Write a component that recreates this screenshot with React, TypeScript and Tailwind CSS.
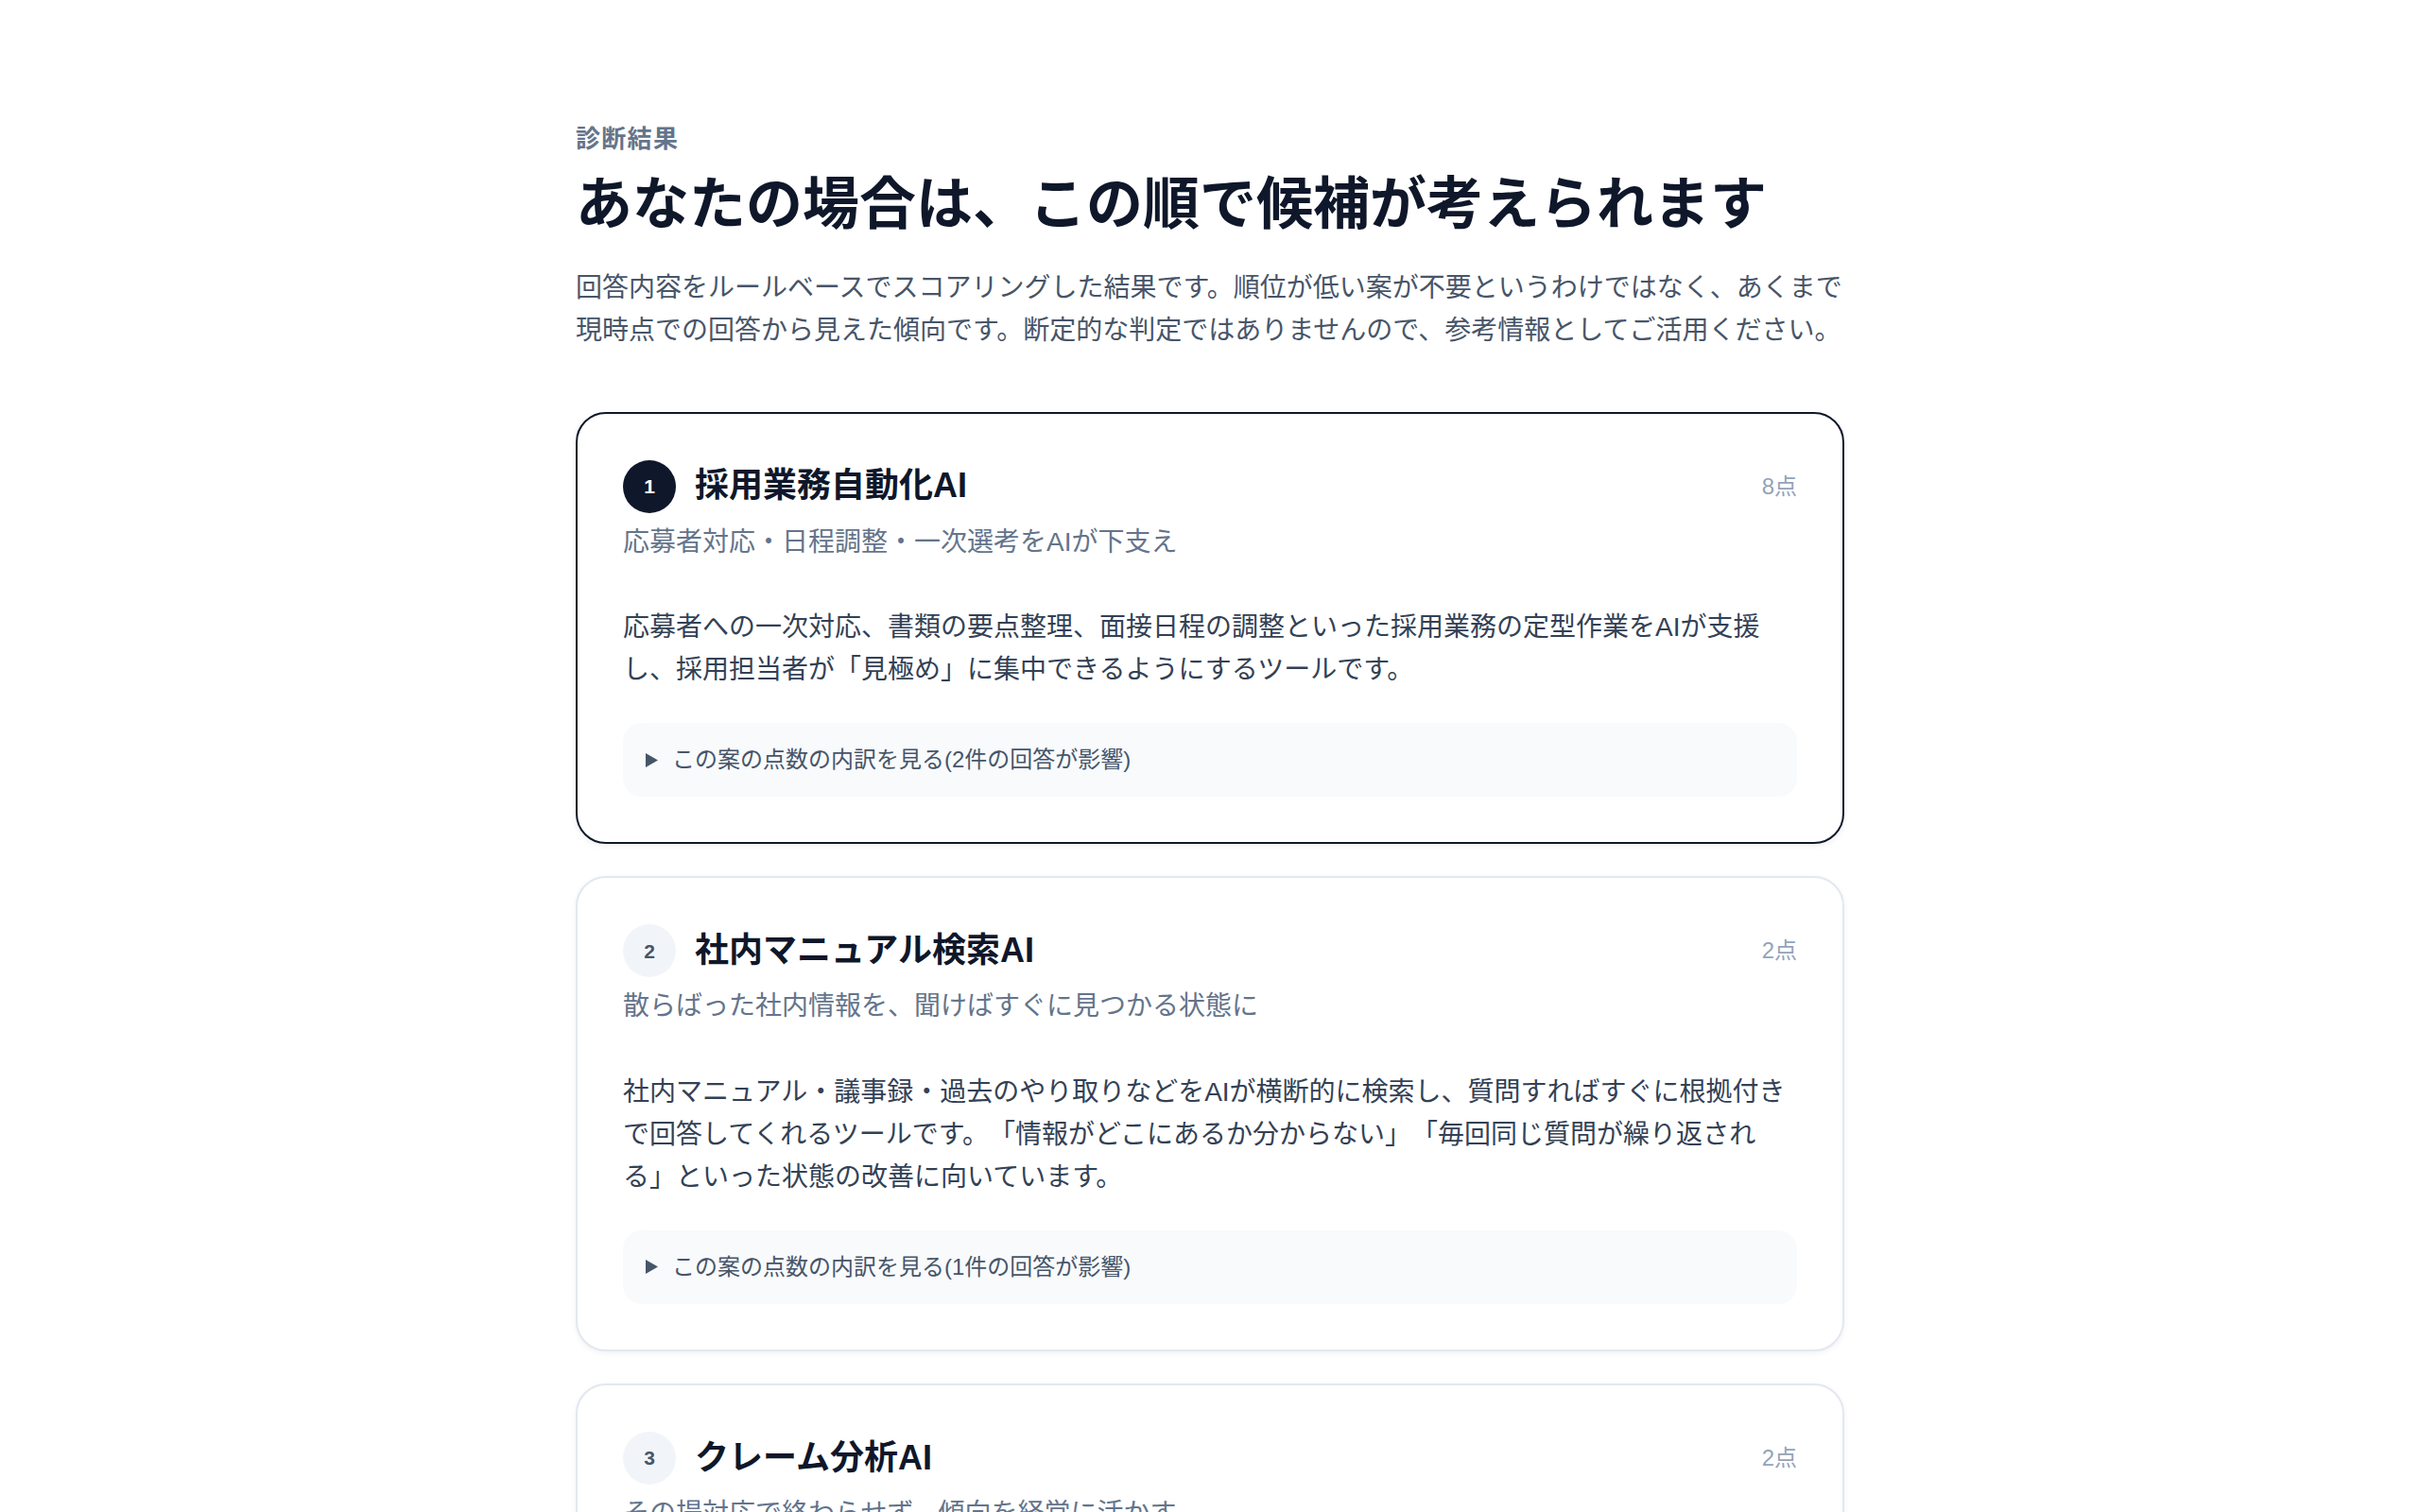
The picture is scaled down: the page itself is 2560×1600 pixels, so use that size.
import React from "react";

type Item = {
  rank: number;
  title: string;
  score: string;
  subtitle: string;
  desc: string;
  count: number;
};

const items: Item[] = [
  {
    rank: 1,
    title: "採用業務自動化AI",
    score: "8点",
    subtitle: "応募者対応・日程調整・一次選考をAIが下支え",
    desc: "応募者への一次対応、書類の要点整理、面接日程の調整といった採用業務の定型作業をAIが支援し、採用担当者が「見極め」に集中できるようにするツールです。",
    count: 2,
  },
  {
    rank: 2,
    title: "社内マニュアル検索AI",
    score: "2点",
    subtitle: "散らばった社内情報を、聞けばすぐに見つかる状態に",
    desc: "社内マニュアル・議事録・過去のやり取りなどをAIが横断的に検索し、質問すればすぐに根拠付きで回答してくれるツールです。「情報がどこにあるか分からない」「毎回同じ質問が繰り返される」といった状態の改善に向いています。",
    count: 1,
  },
  {
    rank: 3,
    title: "クレーム分析AI",
    score: "2点",
    subtitle: "その場対応で終わらせず、傾向を経営に活かす",
    desc: "問い合わせやクレームの内容をAIが自動で分類・集計し、頻出する不満や改善すべきポイントを可視化するツールです。個別対応の記録を、サービス改善や経営判断の材料として活用できます。",
    count: 1,
  },
];

function Card({ item }: { item: Item }) {
  const top = item.rank === 1;
  return (
    <div
      className={
        top
          ? "rounded-[32px] border-2 border-[#0f172a] bg-white px-12 pt-[49px] pb-[48px] shadow-[0_2px_6px_rgba(15,23,42,0.08)]"
          : "rounded-[32px] border-2 border-[#e2e8f0] bg-white px-12 pt-[49px] pb-[48px] shadow-[0_2px_6px_rgba(15,23,42,0.06)]"
      }
    >
      <div className="flex items-center">
        <div
          className={
            top
              ? "flex h-14 w-14 shrink-0 items-center justify-center rounded-full bg-[#0f172a] text-[21px] font-bold text-white"
              : "flex h-14 w-14 shrink-0 items-center justify-center rounded-full bg-[#f1f5f9] text-[21px] font-bold text-[#475569]"
          }
        >
          {item.rank}
        </div>
        <h2 className="ml-5 flex-1 text-[36px] font-bold leading-[1.3] text-[#0f172a]">
          {item.title}
        </h2>
        <div className="text-[24px] leading-none text-[#94a3b8]">{item.score}</div>
      </div>
      <p className="mt-[9px] text-[28px] leading-[1.6] text-[#64748b]">{item.subtitle}</p>
      <p className="mt-[46px] text-[28px] leading-[1.6] text-[#334155]">{item.desc}</p>
      <details className="mt-[33px] rounded-[20px] bg-[#f8fafc] px-6 py-5">
        <summary className="flex list-none items-center text-[24px] leading-[1.6] text-[#475569] [&::-webkit-details-marker]:hidden">
          <svg width="13" height="15" viewBox="0 0 13 15" className="mr-[15px] shrink-0">
            <path d="M0 0 L13 7.5 L0 15 Z" fill="#475569" />
          </svg>
          <span>この案の点数の内訳を見る({item.count}件の回答が影響)</span>
        </summary>
      </details>
    </div>
  );
}

export default function App() {
  return (
    <div
      className="min-h-screen bg-white [text-spacing-trim:space-all]"
      style={{ fontFamily: '"Liberation Sans", "Noto Sans CJK JP", sans-serif' }}
    >
      <div className="mx-auto w-[1342px] pt-32 pb-32">
        <div className="text-[26px] font-bold leading-[1.5] tracking-[0.05em] text-[#64748b]">
          診断結果
        </div>
        <h1 className="mt-3 text-[60px] font-bold leading-[1.25] text-[#0f172a]">
          あなたの場合は、この順で候補が考えられます
        </h1>
        <p className="mt-[29px] text-[28px] leading-[1.6] text-[#475569]">
          回答内容をルールベースでスコアリングした結果です。順位が低い案が不要というわけではなく、あくまで現時点での回答から見えた傾向です。断定的な判定ではありませんので、参考情報としてご活用ください。
        </p>
        <div className="mt-[63px] flex flex-col gap-[34px]">
          {items.map((it) => (
            <Card key={it.rank} item={it} />
          ))}
        </div>
      </div>
    </div>
  );
}
